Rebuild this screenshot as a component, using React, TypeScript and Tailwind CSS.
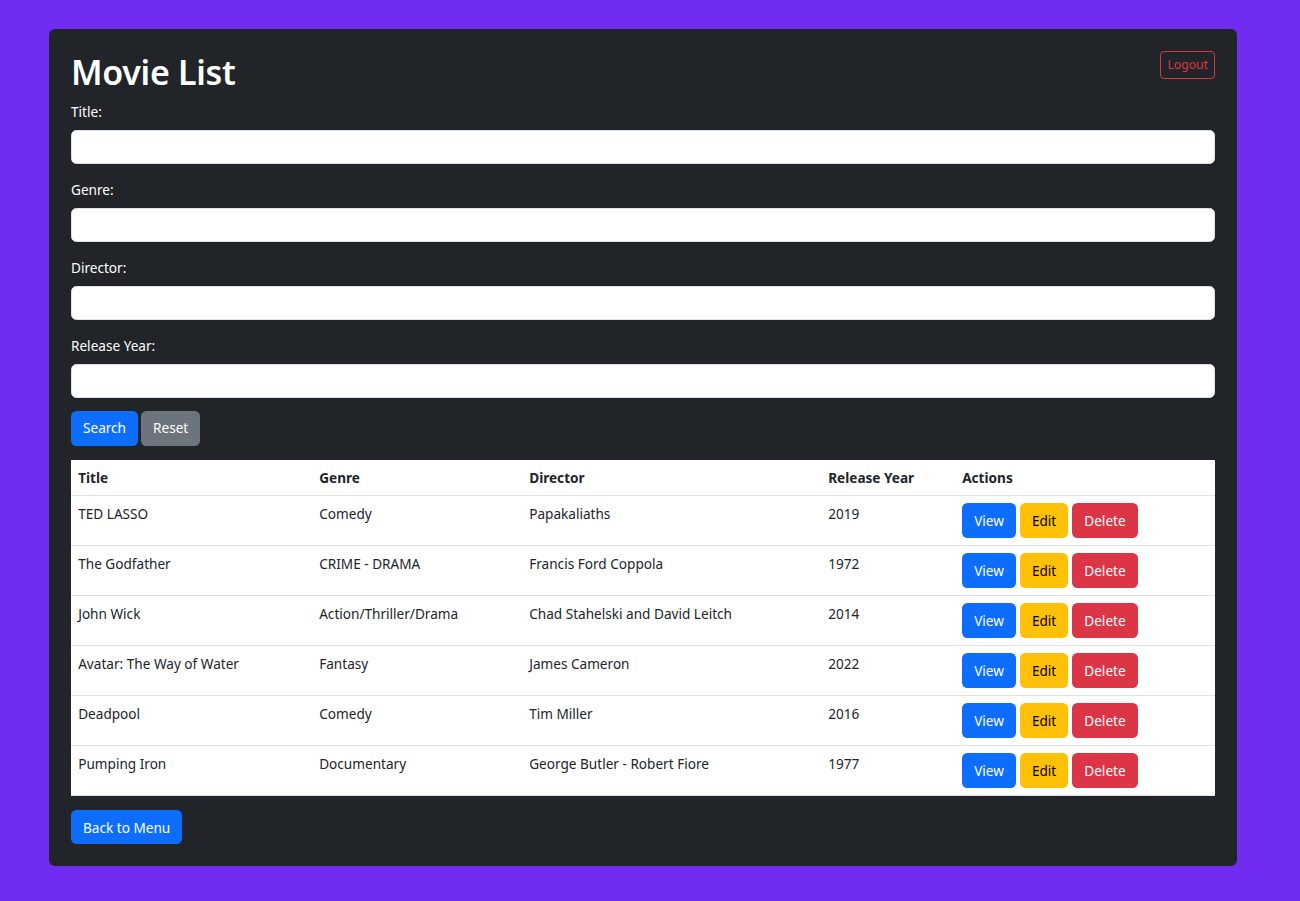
import type { ReactNode } from "react";

const movies = [
  { title: "TED LASSO", genre: "Comedy", director: "Papakaliaths", year: "2019" },
  { title: "The Godfather", genre: "CRIME - DRAMA", director: "Francis Ford Coppola", year: "1972" },
  { title: "John Wick", genre: "Action/Thriller/Drama", director: "Chad Stahelski and David Leitch", year: "2014" },
  { title: "Avatar: The Way of Water", genre: "Fantasy", director: "James Cameron", year: "2022" },
  { title: "Deadpool", genre: "Comedy", director: "Tim Miller", year: "2016" },
  { title: "Pumping Iron", genre: "Documentary", director: "George Butler - Robert Fiore", year: "1977" },
];

const fields = ["Title:", "Genre:", "Director:", "Release Year:"];

function Btn({ color, children }: { color: string; children: ReactNode }) {
  return (
    <button className={`px-[11px] rounded-[5.4px] border border-transparent text-[13.6px] leading-[21.6px] ${color}`}>
      {children}
    </button>
  );
}

export default function App() {
  return (
    <div className="min-h-[901px] bg-[#712cf2] pt-[29px] pl-[49px] font-['Noto_Sans','Open_Sans',sans-serif] text-[13.6px] leading-[21.6px]">
      <div className="w-[1188px] bg-[#212529] rounded-[6px] p-[22px] text-white">
        <div className="flex justify-between items-start">
          <h1 className="text-[34px] leading-[43.2px] font-semibold mb-[7.2px] tracking-[-0.3px]">Movie List</h1>
          <button className="h-[28px] px-[6px] rounded-[4px] border border-[#dc3545] text-[#dc3545] text-[12.2px] leading-[18.9px]">
            Logout
          </button>
        </div>

        {fields.map((f) => (
          <div key={f} className="mb-[15px]">
            <label className="block mb-[7.2px]">{f}</label>
            <input className="block w-full h-[34px] bg-white rounded-[5.4px] border border-[#dee2e6] px-3 text-[#212529] outline-none" />
          </div>
        ))}

        <div className="flex gap-[3px] -mt-[2px] mb-[14px]">
          <Btn color="h-[35px] bg-[#0d6efd] text-white">Search</Btn>
          <Btn color="h-[35px] bg-[#6c757d] text-white">Reset</Btn>
        </div>

        <table className="w-full bg-white text-[#212529] border-collapse mb-[14px]">
          <thead>
            <tr className="border-b border-[#dee2e6] text-left">
              <th className="w-[241px] px-[7.2px] py-[7.2px] font-bold">Title</th>
              <th className="w-[210px] px-[7.2px] py-[7.2px] font-bold">Genre</th>
              <th className="w-[299px] px-[7.2px] py-[7.2px] font-bold">Director</th>
              <th className="w-[134px] px-[7.2px] py-[7.2px] font-bold">Release Year</th>
              <th className="px-[7.2px] py-[7.2px] font-bold">Actions</th>
            </tr>
          </thead>
          <tbody>
            {movies.map((m) => (
              <tr key={m.title} className="border-b border-[#dee2e6] align-top">
                <td className="px-[7.2px] py-[7px]">{m.title}</td>
                <td className="px-[7.2px] py-[7px]">{m.genre}</td>
                <td className="px-[7.2px] py-[7px]">{m.director}</td>
                <td className="px-[7.2px] py-[7px]">{m.year}</td>
                <td className="px-[7.2px] py-[7px]">
                  <div className="flex gap-[4px]">
                    <Btn color="h-[35px] bg-[#0d6efd] text-white">View</Btn>
                    <Btn color="h-[35px] bg-[#ffc107] text-black">Edit</Btn>
                    <Btn color="h-[35px] bg-[#dc3545] text-white">Delete</Btn>
                  </div>
                </td>
              </tr>
            ))}
          </tbody>
        </table>

        <Btn color="block h-[34px] bg-[#0d6efd] text-white">Back to Menu</Btn>
      </div>
    </div>
  );
}
